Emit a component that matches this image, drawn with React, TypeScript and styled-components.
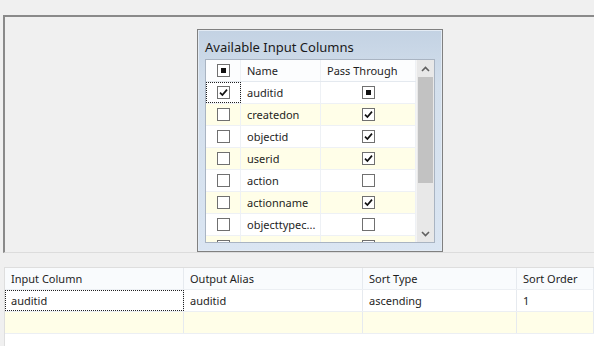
import styled, { createGlobalStyle, css } from 'styled-components';

const GlobalStyle = createGlobalStyle`
  html, body {
    margin: 0;
    padding: 0;
    background: #f0f0f0;
    overflow: hidden;
  }

  body {
    font-family: 'Noto Sans', 'Open Sans', sans-serif;
    font-size: 11px;
    color: #1e1e1e;
  }
`;

const Page = styled.div`
  display: flex;
  flex-direction: column;

  width: 594px;
  height: 346px;
`;

const Designer = styled.div`
  display: flex;
  align-items: flex-start;

  height: 238px;
  margin: 15px 0 0 3px;
  padding: 12px 0 0 192px;

  border-top: 2px solid #8a8a8a;
  border-left: 2px solid #8a8a8a;
  border-bottom: 1px solid #dcdcdc;
  box-sizing: border-box;
  overflow: hidden;
`;

const ColumnsBox = styled.div`
  display: flex;
  flex-direction: column;
  flex-shrink: 0;

  width: 246px;
  height: 223px;
  padding: 0 7px 8px;

  background: linear-gradient(180deg, #c3d2e3 0%, #d3dfec 25%, #dae5f2 100%);
  border: 1px solid #808080;
  box-shadow: inset 0 0 0 1px #e3ebf4;
  box-sizing: border-box;
`;

const BoxTitle = styled.div`
  height: 29px;
  padding-top: 7px;

  font-size: 13px;
  line-height: 20px;
  color: #1a1a1a;
  box-sizing: border-box;
`;

const ListFrame = styled.div`
  display: flex;
  flex: 1;

  background: #ffffff;
  border: 1px solid #a9b4c2;
  overflow: hidden;
`;

const ListBody = styled.div`
  flex: 1;
  overflow: hidden;
`;

const ListRow = styled.div<{ $shade?: boolean; $header?: boolean }>`
  display: grid;
  grid-template-columns: 35px 80px 1fr;

  height: 22px;
  background: ${(props) => (props.$shade ? '#fffee8' : '#ffffff')};
  border-bottom: 1px solid #eef1f5;
  box-sizing: border-box;

  ${(props) =>
    props.$header &&
    css`
      background: #fcfdfe;
      border-bottom: 1px solid #e4e9ef;
    `}
`;

const Cell = styled.div<{ $center?: boolean; $focus?: boolean }>`
  display: flex;
  align-items: center;
  justify-content: ${(props) => (props.$center ? 'center' : 'flex-start')};

  padding-left: ${(props) => (props.$center ? '0' : '6px')};
  border-right: 1px solid #eef1f5;
  white-space: nowrap;
  overflow: hidden;
  box-sizing: border-box;

  ${(props) =>
    props.$focus &&
    css`
      outline: 1px dotted #202020;
      outline-offset: -1px;
    `}
`;

const Box = styled.span`
  display: inline-flex;
  align-items: center;
  justify-content: center;

  width: 13px;
  height: 13px;

  background: #ffffff;
  border: 1px solid #707070;
  box-sizing: border-box;
`;

const Square = styled.span`
  width: 5px;
  height: 5px;
  background: #111111;
`;

const ScrollBar = styled.div`
  display: flex;
  flex-direction: column;
  align-items: center;

  width: 17px;
  background: #e8e8e8;
  border-left: 1px solid #f4f4f4;
`;

const ScrollArrow = styled.div`
  display: flex;
  align-items: center;
  justify-content: center;

  width: 100%;
  height: 17px;
  flex-shrink: 0;
`;

const ScrollThumb = styled.div`
  width: 15px;
  height: 106px;
  background: #c2c2c2;
`;

const ScrollSpace = styled.div`
  flex: 1;
`;

const Grid = styled.div`
  flex: 1;

  margin: 14px 0 0 4px;

  background: #ffffff;
  border-top: 1px solid #dedede;
  border-left: 1px solid #dedede;
`;

const GridRow = styled.div<{ $shade?: boolean; $header?: boolean }>`
  display: grid;
  grid-template-columns: 179px 179px 154px 1fr;

  height: 22px;
  background: ${(props) => (props.$shade ? '#fffee8' : props.$header ? '#f9fbfd' : '#ffffff')};
  border-bottom: 1px solid #eceff3;
  box-sizing: border-box;
`;

const GridCell = styled.div<{ $focus?: boolean }>`
  display: flex;
  align-items: center;

  padding-left: 6px;
  border-right: 1px solid #e6eaef;
  white-space: nowrap;
  box-sizing: border-box;

  ${(props) =>
    props.$focus &&
    css`
      outline: 1px dotted #202020;
      outline-offset: -1px;
    `}
`;

type CheckState = 'on' | 'off' | 'mixed';

const Check = ({ state }: { state: CheckState }) => (
  <Box>
    {state === 'mixed' && <Square />}
    {state === 'on' && (
      <svg width="9" height="9" viewBox="0 0 9 9">
        <path d="M1 4.6 L3.4 7 L8 1.6" fill="none" stroke="#111" strokeWidth="1.7" />
      </svg>
    )}
  </Box>
);

const Chevron = ({ up }: { up?: boolean }) => (
  <svg width="9" height="6" viewBox="0 0 9 6">
    <path
      d={up ? 'M1 5 L4.5 1.5 L8 5' : 'M1 1 L4.5 4.5 L8 1'}
      fill="none"
      stroke="#606060"
      strokeWidth="1.6"
    />
  </svg>
);

const columns: { name: string; selected: CheckState; pass: CheckState }[] = [
  { name: 'auditid', selected: 'on', pass: 'mixed' },
  { name: 'createdon', selected: 'off', pass: 'on' },
  { name: 'objectid', selected: 'off', pass: 'on' },
  { name: 'userid', selected: 'off', pass: 'on' },
  { name: 'action', selected: 'off', pass: 'off' },
  { name: 'actionname', selected: 'off', pass: 'on' },
  { name: 'objecttypec...', selected: 'off', pass: 'off' },
  { name: 'useridna...', selected: 'off', pass: 'off' },
];

export default function App() {
  return (
    <Page>
      <GlobalStyle />
      <Designer>
        <ColumnsBox>
          <BoxTitle>Available Input Columns</BoxTitle>
          <ListFrame>
            <ListBody>
              <ListRow $header>
                <Cell $center>
                  <Check state="mixed" />
                </Cell>
                <Cell>Name</Cell>
                <Cell>Pass Through</Cell>
              </ListRow>
              {columns.map((col, i) => (
                <ListRow key={col.name} $shade={i % 2 === 1}>
                  <Cell $center $focus={i === 0}>
                    <Check state={col.selected} />
                  </Cell>
                  <Cell>{col.name}</Cell>
                  <Cell $center>
                    <Check state={col.pass} />
                  </Cell>
                </ListRow>
              ))}
            </ListBody>
            <ScrollBar>
              <ScrollArrow>
                <Chevron up />
              </ScrollArrow>
              <ScrollThumb />
              <ScrollSpace />
              <ScrollArrow>
                <Chevron />
              </ScrollArrow>
            </ScrollBar>
          </ListFrame>
        </ColumnsBox>
      </Designer>

      <Grid>
        <GridRow $header>
          <GridCell>Input Column</GridCell>
          <GridCell>Output Alias</GridCell>
          <GridCell>Sort Type</GridCell>
          <GridCell>Sort Order</GridCell>
        </GridRow>
        <GridRow>
          <GridCell $focus>auditid</GridCell>
          <GridCell>auditid</GridCell>
          <GridCell>ascending</GridCell>
          <GridCell>1</GridCell>
        </GridRow>
        <GridRow $shade>
          <GridCell />
          <GridCell />
          <GridCell />
          <GridCell />
        </GridRow>
      </Grid>
    </Page>
  );
}
